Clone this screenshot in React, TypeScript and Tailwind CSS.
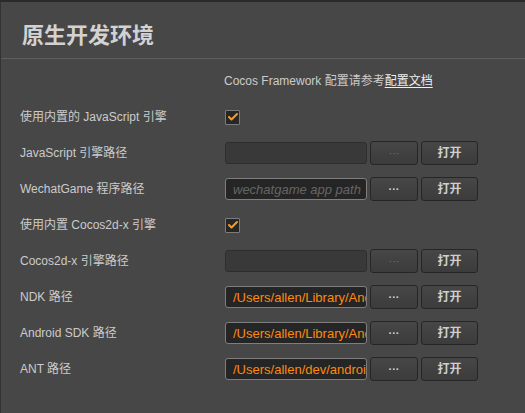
import { Check } from "lucide-react"

const font = { fontFamily: '"Liberation Sans", "Noto Sans CJK SC", sans-serif' }

type Row =
  | { kind: "check"; label: string }
  | { kind: "path"; label: string; value?: string; placeholder?: string; disabled?: boolean }

const rows: Row[] = [
  { kind: "check", label: "使用内置的 JavaScript 引擎" },
  { kind: "path", label: "JavaScript 引擎路径", disabled: true },
  { kind: "path", label: "WechatGame 程序路径", placeholder: "wechatgame app path" },
  { kind: "check", label: "使用内置 Cocos2d-x 引擎" },
  { kind: "path", label: "Cocos2d-x 引擎路径", disabled: true },
  { kind: "path", label: "NDK 路径", value: "/Users/allen/Library/Android/sdk/ndk-bundle" },
  { kind: "path", label: "Android SDK 路径", value: "/Users/allen/Library/Android/sdk" },
  { kind: "path", label: "ANT 路径", value: "/Users/allen/dev/android/apache-ant/bin" },
]

function CheckBox() {
  return (
    <div className="w-[15px] h-[15px] border border-[#7c7c7c] bg-[#262626] rounded-[1px] flex items-center justify-center">
      <Check className="w-[12px] h-[12px] text-[#ff9a1a]" strokeWidth={4} />
    </div>
  )
}

function PathField({ value, placeholder, disabled }: { value?: string; placeholder?: string; disabled?: boolean }) {
  return (
    <div className="flex items-center">
      {disabled ? (
        <input
          disabled
          className="w-[142px] h-[22px] rounded-[3px] border border-[#2e2e2e] bg-[#393939] outline-none"
        />
      ) : (
        <input
          readOnly
          value={value ?? ""}
          placeholder={placeholder}
          className="w-[142px] h-[22px] rounded-[3px] border border-[#7e7e7e] bg-[#252525] pl-[7px] pr-0 text-[13px] text-[#ff8a0d] placeholder:italic placeholder:text-[#666666] outline-none"
          style={font}
        />
      )}
      <button
        className={`ml-[3px] w-[48px] h-[24px] rounded-[3px] border border-[#262626] bg-gradient-to-b from-[#474747] to-[#3c3c3c] text-[11px] leading-none ${
          disabled ? "text-[#6f6f6f]" : "text-[#d0d0d0] font-bold"
        }`}
      >
        ···
      </button>
      <button className="ml-[3px] w-[57px] h-[24px] rounded-[3px] border border-[#262626] bg-gradient-to-b from-[#474747] to-[#3c3c3c] text-[12px] font-bold text-[#cfcfcf]">
        打开
      </button>
    </div>
  )
}

export default function App() {
  return (
    <div className="w-[525px] h-[413px] bg-[#474747] border-t-2 border-t-[#2a2a2a] border-l border-l-[#333333] text-[#cbcbcb] overflow-hidden" style={font}>
      <div className="h-[57px] flex items-center pt-[10px] pl-[21px] border-b border-b-[#5e5e5e]">
        <h1 className="text-[22px] font-bold text-[#d2d2d2]">原生开发环境</h1>
      </div>
      <div className="pt-[4px]">
        <div className="h-[36px] flex items-center pl-[223px] text-[12px]">
          <span>Cocos Framework 配置请参考</span>
          <span className="text-[#eeeeee] underline underline-offset-2">配置文档</span>
        </div>
        {rows.map((row) => (
          <div key={row.label} className="h-[36px] flex items-center">
            <div className="w-[224px] pl-[19px] text-[12px] whitespace-nowrap">{row.label}</div>
            {row.kind === "check" ? (
              <CheckBox />
            ) : (
              <PathField value={row.value} placeholder={row.placeholder} disabled={row.disabled} />
            )}
          </div>
        ))}
      </div>
    </div>
  )
}
